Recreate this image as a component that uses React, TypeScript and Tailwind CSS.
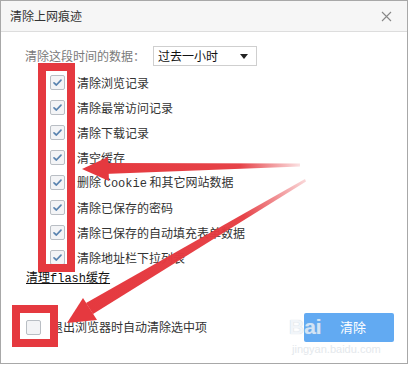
import React from "react";

const items: React.ReactNode[] = [
  "清除浏览记录",
  "清除最常访问记录",
  "清除下载记录",
  "清空缓存",
  <>
    删除 <span className="font-['Liberation_Mono',monospace] text-[12px]">Cookie</span> 和其它网站数据
  </>,
  "清除已保存的密码",
  "清除已保存的自动填充表单数据",
  "清除地址栏下拉列表",
];

function CheckBox({ checked }: { checked: boolean }) {
  return (
    <div className="w-[15px] h-[15px] shrink-0 rounded-[2px] border border-[#b9bec4] bg-[#f3f4f6] flex items-center justify-center">
      {checked && (
        <svg width="13" height="13" viewBox="0 0 13 13">
          <path d="M3 6.8 L5.4 9 L10 4.2" fill="none" stroke="#5a84b0" strokeWidth="1.7" strokeLinecap="round" strokeLinejoin="round" />
        </svg>
      )}
    </div>
  );
}

export default function App() {
  return (
    <div className="relative w-[410px] h-[365px] overflow-hidden bg-white font-['Noto_Sans_CJK_SC','Liberation_Sans',sans-serif]">
      <div className="w-[408px] h-[364px] border border-[#a8a8a8] bg-white flex flex-col">
        <div className="h-[31px] shrink-0 bg-[#f6f6f6] border-b border-[#dddddd] flex items-center justify-between pl-[9px] pr-[15px]">
          <span className="text-[12px] leading-[16px] text-[#333]">清除上网痕迹</span>
          <svg width="11" height="11" viewBox="0 0 11 11">
            <path d="M1 1 L10 10 M10 1 L1 10" stroke="#888" strokeWidth="1.1" />
          </svg>
        </div>
        <div className="pl-[24px] pr-[13px] pt-[14px] flex flex-col">
          <div className="flex items-center h-[20px]">
            <span className="w-[128px] text-[12px] leading-[16px] text-[#7a7a7a]">清除这段时间的数据：</span>
            <div className="w-[104px] h-[20px] border border-[#cfcfcf] bg-white flex items-center justify-between pl-[4px] pr-[8px]">
              <span className="text-[12px] leading-[16px] text-[#111]">过去一小时</span>
              <svg width="8" height="5" viewBox="0 0 8 5">
                <path d="M0 0 L8 0 L4 5 Z" fill="#222" />
              </svg>
            </div>
          </div>
          <div className="mt-[4px] pl-[25px] flex flex-col">
            {items.map((t, i) => (
              <div key={i} className="h-[25px] flex items-center gap-[12px]">
                <CheckBox checked />
                <span className="text-[12px] leading-[16px] text-[#333] whitespace-nowrap">{t}</span>
              </div>
            ))}
          </div>
          <div className="h-[16px] ml-[1px] flex items-center">
            <span className="text-[12px] leading-[16px] text-[#111] underline whitespace-nowrap">
              清理<span className="font-['Liberation_Mono',monospace]">flash</span>缓存
            </span>
          </div>
          <div className="mt-[26px] h-[30px] flex items-center justify-between">
            <div className="flex items-center gap-[10px] ml-[1px]">
              <CheckBox checked={false} />
              <span className="text-[12px] leading-[16px] text-[#333]">退出浏览器时自动清除选中项</span>
            </div>
            <div className="w-[90px] h-[29px] rounded-[2px] bg-[#62aaf2] flex items-center justify-end pr-[28px]">
              <span className="text-[13px] leading-[16px] text-white">清除</span>
            </div>
          </div>
        </div>
      </div>

      {/* watermark */}
      <div className="absolute left-[289px] top-[316px] flex items-end opacity-80 pointer-events-none">
        <span className="text-[21px] leading-[22px] font-bold text-[#eef3f8] font-['Liberation_Sans',sans-serif] [text-shadow:0_0_1px_#b8c4d0]">Bai</span>
      </div>
      <div className="absolute left-[292px] top-[343px] text-[11px] leading-[12px] text-[#e4e8ec] font-['Liberation_Sans',sans-serif] pointer-events-none">
        jingyan.baidu.com
      </div>

      {/* red annotation boxes */}
      <div className="absolute left-[38px] top-[63px] w-[37px] h-[209px] border-[8px] border-[#e5393f]" />
      <div className="absolute left-[12px] top-[305px] w-[46px] h-[42px] border-[8px] border-[#e5393f]" />

      {/* arrows */}
      <svg className="absolute left-0 top-0 pointer-events-none" width="410" height="365" viewBox="0 0 410 365">
        <defs>
          <linearGradient id="g1" x1="300" y1="0" x2="100" y2="0" gradientUnits="userSpaceOnUse">
            <stop offset="0" stopColor="#e5393f" stopOpacity="0.15" />
            <stop offset="0.3" stopColor="#e5393f" stopOpacity="0.95" />
            <stop offset="1" stopColor="#e5393f" stopOpacity="1" />
          </linearGradient>
          <linearGradient id="g2" x1="310" y1="178" x2="90" y2="309" gradientUnits="userSpaceOnUse">
            <stop offset="0" stopColor="#e5393f" stopOpacity="0.15" />
            <stop offset="0.3" stopColor="#e5393f" stopOpacity="0.95" />
            <stop offset="1" stopColor="#e5393f" stopOpacity="1" />
          </linearGradient>
        </defs>
        {/* arrow 1 */}
        <polygon points="104,163 300,163.5 300,166.5 104,174" fill="url(#g1)" />
        <polygon points="82,169 108,157 109,181" fill="#e5393f" />
        {/* arrow 2 */}
        <polygon points="93,314 86,303 305,179 306,181.5" fill="url(#g2)" />
        <polygon points="67,323 83,298 97,320" fill="#e5393f" />
      </svg>
    </div>
  );
}
